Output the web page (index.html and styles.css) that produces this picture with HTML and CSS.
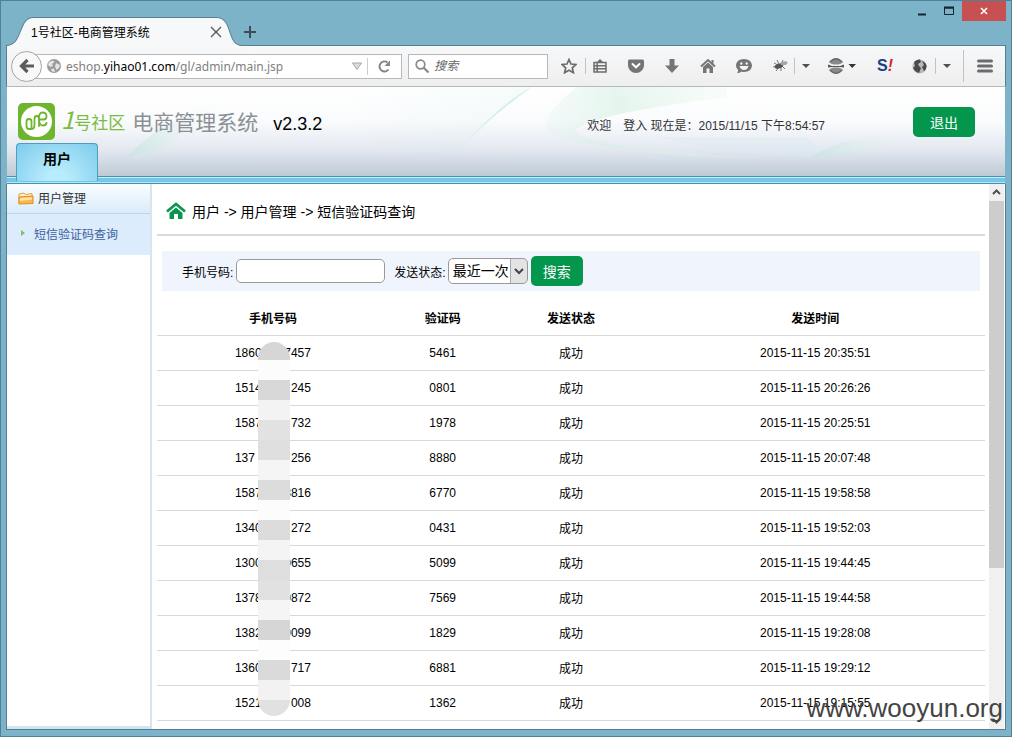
FILE: index.html
```html
<!DOCTYPE html>
<html lang="zh-CN">
<head>
  <meta charset="UTF-8" />
  <meta name="viewport" content="width=device-width, initial-scale=1.0"/>
  <title>1号社区-电商管理系统</title>
  <link rel="stylesheet" href="styles.css">
</head>
<body>
  <div class="window">
    <div class="titlebar">
      <div class="tab">
        <svg class="tab-shape" viewBox="0 0 242 29" preserveAspectRatio="none">
          <path d="M0 29V28.500C18 28.500 12 1.500 28 1.500H216C233 1.500 226 28.500 242 28.500V29Z" fill="#f7f8f9"/>
          <path d="M0 28.500C18 28.500 12 1.500 28 1.500H216C233 1.500 226 28.500 242 28.500" fill="none" stroke="#587f90"/>
        </svg>
        <span class="tab-title">1号社区-电商管理系统</span>
        <button class="plain" aria-label="关闭标签页">
          <svg width="12" height="12" viewBox="0 0 12 12"><path d="M1 1L11 11M11 1L1 11" stroke="#555" stroke-width="1.300"/></svg>
        </button>
      </div>
      <button class="plain new-tab" aria-label="新标签页">
        <svg width="14" height="14" viewBox="0 0 14 14"><path d="M7 1V13M1 7H13" stroke="#3f4d54" stroke-width="2"/></svg>
      </button>
      <div class="window-buttons">
        <button class="plain" aria-label="最小化"><svg width="10" height="10" viewBox="0 0 10 10"><path d="M1 8.500H9" stroke="#16242b" stroke-width="2"/></svg></button>
        <button class="plain" aria-label="最大化"><svg width="10" height="10" viewBox="0 0 10 10"><path d="M.5 2H9.500V8.500H.5Z" fill="none" stroke="#16242b"/><path d="M0 1.500H10" stroke="#16242b" stroke-width="2"/></svg></button>
        <button class="plain close" aria-label="关闭"><svg width="8" height="8" viewBox="0 0 8 8"><path d="M1 1L7 7M7 1L1 7" stroke="#fff" stroke-width="1.600"/></svg></button>
      </div>
    </div>

    <div class="toolbar">
      <button class="plain back" aria-label="后退">
        <svg width="16" height="16" viewBox="0 0 16 16"><path d="M8.500 2L2.500 8L8.500 14M3 8H15" fill="none" stroke="#5c5c5e" stroke-width="3.200"/></svg>
      </button>
      <div class="urlbar">
        <svg width="14" height="14" viewBox="0 0 14 14"><circle cx="7" cy="7" r="7" fill="#9b9b9b"/><path d="M2 3L6 1.500L7.500 3L5 5L6 7L3.500 8L1 6ZM9 4L13 6L12 9L9.500 11L8 7.500ZM4 10L7 9.500L8 13L5 12.500Z" fill="#e4e4e4"/></svg>
        <span class="url">eshop.<b>yihao01.com</b>/gl/admin/main.jsp</span>
        <svg width="10" height="8" viewBox="0 0 10 8"><path d="M.5 1H9.500L5 7.500Z" fill="#ddd" stroke="#a5a5a5"/></svg>
        <button class="plain reload" aria-label="刷新">
          <svg width="13" height="13" viewBox="0 0 13 13"><path d="M10.500 9.500A5 5 0 1 1 9.500 2.500" fill="none" stroke="#858587" stroke-width="2"/><path d="M12 .5V6H6.500Z" fill="#858587"/></svg>
        </button>
      </div>
      <div class="searchbar">
        <svg width="15" height="15" viewBox="0 0 15 15"><circle cx="5.500" cy="5.500" r="4.300" fill="none" stroke="#8a8a8c" stroke-width="1.700"/><path d="M8.500 8.500L13.500 13.500" stroke="#8a8a8c" stroke-width="2.300"/></svg>
        <input type="text" placeholder="搜索" aria-label="搜索网络">
      </div>

      <button class="plain tool star" aria-label="收藏"><svg width="16" height="16" viewBox="0 0 16 16"><path d="M8 1.500L10 6L15 6.500L11.300 9.800L12.400 14.700L8 12.200L3.600 14.700L4.700 9.800L1 6.500L6 6Z" fill="none" stroke="#6c6c6e" stroke-width="1.700"/></svg></button>
      <i class="sep"></i>
      <button class="plain tool list" aria-label="书签"><svg width="16" height="16" viewBox="0 0 16 16"><path d="M2 4.500H14V14H2ZM2 7.700H14M2 10.800H14M5.200 4.500V14" fill="none" stroke="#6c6c6e" stroke-width="1.500"/><path d="M5 4L8 1L11 4Z" fill="#6c6c6e"/></svg></button>
      <button class="plain tool" aria-label="Pocket"><svg width="16" height="16" viewBox="0 0 16 16"><path d="M1.500 1.500H14.500Q16 1.500 16 3V7.500A8 7.500 0 0 1 0 7.500V3Q0 1.500 1.500 1.500Z" fill="#757577"/><path d="M4.500 6L8 9.300L11.500 6" fill="none" stroke="#fff" stroke-width="2" stroke-linecap="round"/></svg></button>
      <button class="plain tool" aria-label="下载"><svg width="16" height="16" viewBox="0 0 16 16"><path d="M5.500 1H10.500V7.500H15L8 15L1 7.500H5.500Z" fill="#757577"/></svg></button>
      <button class="plain tool" aria-label="主页"><svg width="16" height="16" viewBox="0 0 16 16"><path d="M1 8.500L8 2L15 8.500" fill="none" stroke="#757577" stroke-width="2"/><path d="M3 9L8 4.500L13 9V15H9.500V10.500H6.500V15H3ZM11.500 2H13.500V6L11.500 4Z" fill="#757577"/></svg></button>
      <button class="plain tool" aria-label="聊天"><svg width="16" height="16" viewBox="0 0 16 16"><path d="M8 1C12.500 1 16 3.800 16 7.500S12.500 14 8 14Q6.500 14 5.500 13.500Q4 15 1 15Q2.500 13.500 2 11.800Q0 10 0 7.500C0 3.800 3.500 1 8 1Z" fill="#757577"/><circle cx="5.300" cy="5.500" r="1.200" fill="#f4f4f4"/><circle cx="10.700" cy="5.500" r="1.200" fill="#f4f4f4"/><path d="M3.500 8H12.500Q11.500 12 8 12T3.500 8Z" fill="#f4f4f4"/></svg></button>
      <button class="plain tool bug" aria-label="Firebug"><svg width="16" height="16" viewBox="0 0 16 16"><path d="M2 5L5 6.500M1 9L5 8M4 13L7 9M9 13V9M13 11L10 8M11 2L9 6M5 2L7 6" stroke="#777" fill="none"/><ellipse cx="7" cy="8" rx="4.500" ry="2.300" fill="#555" transform="rotate(-20 7 8)"/><ellipse cx="12" cy="5.300" rx="3.500" ry="1.800" fill="#a5a5a5" transform="rotate(-10 12 5)"/></svg></button>
      <i class="sep"></i>
      <button class="plain caret" aria-label="Firebug 菜单"><svg width="8" height="4" viewBox="0 0 8 4"><path d="M0 0H8L4 4Z" fill="#505052"/></svg></button>
      <button class="plain proxy" aria-label="代理"><svg width="28" height="16" viewBox="0 0 28 16"><path d="M2.500 5.500Q3.500 1 8 1T13.500 5.500L10.500 6.500H5.500ZM2.500 10.500Q3.500 15 8 15T13.500 10.500L10.500 9.500H5.500Z" fill="#8a8a8a"/><path d="M1.500 4.500Q8 -3 14.500 4.500M1.500 11.500Q8 19 14.500 11.500" fill="none" stroke="#666" stroke-width="1.300"/><path d="M0 6.500L4 8H12L16 6.500V9.500L12 9H4L0 9.500Z" fill="#555"/><path d="M20.500 6H28L24.200 10Z" fill="#333"/></svg></button>
      <button class="plain tool seo" aria-label="S!"><span>S<em>!</em></span></button>
      <button class="plain tool globe" aria-label="地球"><svg width="15" height="15" viewBox="0 0 15 15"><circle cx="7.500" cy="7.500" r="7" fill="#b9b9b9"/><path d="M2 3Q5 0 8 .6L9 3L6 5L7 7L9 9L7 14Q3 13 1 9L3 7ZM10 2Q15 4 14.500 8Q14 11 12 12L10 8L12 6Z" fill="#4a4a4a"/></svg></button>
      <i class="sep"></i>
      <button class="plain caret" aria-label="更多"><svg width="8" height="4" viewBox="0 0 8 4"><path d="M0 0H8L4 4Z" fill="#505052"/></svg></button>
      <i class="sep tall"></i>
      <button class="plain menu" aria-label="打开菜单"><svg width="16" height="14" viewBox="0 0 16 14"><path d="M1.500 2H14.500M1.500 7H14.500M1.500 12H14.500" stroke="#6c6c6e" stroke-width="3" stroke-linecap="round"/></svg></button>
    </div>

    <header class="banner">
      <svg class="waves" viewBox="0 0 998 90" preserveAspectRatio="none">
        <defs>
          <linearGradient id="wave" x1="0" y1="0" x2="1" y2="0"><stop offset="0" stop-color="#c9ece3" stop-opacity="0"/><stop offset="1" stop-color="#c9ece3" stop-opacity=".4"/></linearGradient>
          <linearGradient id="fade" x1="0" y1="0" x2="1" y2="0"><stop offset="0" stop-color="#bfe6dc" stop-opacity=".6"/><stop offset="1" stop-color="#e8f5f2" stop-opacity="0"/></linearGradient>
          <linearGradient id="swoosh" x1="0" y1="0" x2="1" y2="0"><stop offset="0" stop-color="#d9f1ea" stop-opacity=".2"/><stop offset=".3" stop-color="#d5f0e2" stop-opacity=".6"/><stop offset="1" stop-color="#e9f8ee" stop-opacity="0"/></linearGradient>
        </defs>
        <path d="M120 70Q150 35 215 15Q180 45 155 62Z" fill="url(#fade)"/>
        <path d="M340 0H525Q490 24 455 62Q400 75 350 50Z" fill="url(#wave)" opacity=".4"/>
        <path d="M525 0Q495 15 455 60Q480 32 525 0Z" fill="#c0e8da" opacity=".6"/>
        <path d="M720 0H570Q520 40 550 50Q640 72 780 72Q570 62 569 43Q580 28 720 10Z" fill="url(#swoosh)"/>
        <path d="M650 50H800L820 70Q740 72 650 50Z" fill="#ddebf0" opacity=".4"/>
        <path d="M805 70Q835 48 895 50Q860 65 825 70Z" fill="url(#fade)"/>
      </svg>
      <div class="banner-top">
        <svg class="logo" width="37" height="37" viewBox="0 0 37 37">
          <rect width="37" height="37" rx="5" fill="#6cb52d"/>
          <circle cx="18.500" cy="18.500" r="15.500" fill="#fff"/>
          <path d="M14 26H11Q8.500 26 8.500 23V18.500Q8.500 16 11 16T13.500 18.500V26M13.500 26Q16.500 26 16.500 22V15.500Q16.500 13 18.700 13T21 15.500V23M21 17Q20.500 9.500 24.500 9.500Q28.500 9.500 28.500 13.500Q28.500 16.500 25.500 16.500H22M21 17Q21.500 22.500 25 22.500Q28 22.500 28.500 20" fill="none" stroke="#6cb52d" stroke-width="1.800" stroke-linecap="round"/>
        </svg>
        <span class="brand"><i>1</i>号社区</span>
        <span class="system">电商管理系统</span>
        <span class="version">v2.3.2</span>
        <span class="welcome">欢迎&emsp;登入 现在是：2015/11/15 下午8:54:57</span>
        <button class="btn logout">退出</button>
      </div>
      <nav class="nav"><a href="#">用户</a></nav>
    </header>

    <div class="content">
      <aside class="sidebar">
        <div class="menu-title">
          <svg width="16" height="14" viewBox="0 0 16 14"><path d="M1 12.500V3L6 2L7.500 3.500L14 2.500V6" fill="#fff3cf" stroke="#e4a13b"/><path d="M1 6L15 5V12.500L1 13Z" fill="#fbb649" stroke="#de8f2a"/><path d="M2 7L14 6.300V8.500L2 10Z" fill="#ffe2a6"/></svg>
          用户管理
        </div>
        <a class="menu-item" href="#"><svg width="4" height="6" viewBox="0 0 4 6"><path d="M0 0L4 3L0 6Z" fill="#7fbf6c"/></svg>短信验证码查询</a>
      </aside>

      <main class="main">
        <div class="crumbs">
          <svg width="20" height="18" viewBox="0 0 20 18"><path d="M1 9.500L10 2L19 9.500" fill="none" stroke="#0b9650" stroke-width="2.800"/><path d="M3.500 11L10 5.600L16.500 11V17H12V12H8V17H3.500Z" fill="#0b9650"/></svg>
          用户 -&gt; 用户管理 -&gt; 短信验证码查询
        </div>

        <form class="search">
          <label for="phone">手机号码:</label>
          <input type="text" id="phone">
          <label class="status-label" for="status">发送状态:</label>
          <div class="select">
            <select id="status">
              <option>最近一次</option>
            </select>
            <svg width="10" height="7" viewBox="0 0 10 7"><path d="M1 1L5 5L9 1" fill="none" stroke="#444" stroke-width="2"/></svg>
          </div>
          <button type="button" class="btn">搜索</button>
        </form>

        <div class="records">
          <table>
            <thead>
              <tr><th class="c-phone">手机号码</th><th class="c-code">验证码</th><th class="c-status">发送状态</th><th>发送时间</th></tr>
            </thead>
            <tbody>
              <tr><td><span class="phone"><span>1860</span><span>7457</span></span></td><td>5461</td><td>成功</td><td>2015-11-15 20:35:51</td></tr>
              <tr><td><span class="phone"><span>1514</span><span>245</span></span></td><td>0801</td><td>成功</td><td>2015-11-15 20:26:26</td></tr>
              <tr><td><span class="phone"><span>1587</span><span>732</span></span></td><td>1978</td><td>成功</td><td>2015-11-15 20:25:51</td></tr>
              <tr><td><span class="phone"><span>137</span><span>256</span></span></td><td>8880</td><td>成功</td><td>2015-11-15 20:07:48</td></tr>
              <tr><td><span class="phone"><span>1587</span><span>8816</span></span></td><td>6770</td><td>成功</td><td>2015-11-15 19:58:58</td></tr>
              <tr><td><span class="phone"><span>1340</span><span>272</span></span></td><td>0431</td><td>成功</td><td>2015-11-15 19:52:03</td></tr>
              <tr><td><span class="phone"><span>1300</span><span>0655</span></span></td><td>5099</td><td>成功</td><td>2015-11-15 19:44:45</td></tr>
              <tr><td><span class="phone"><span>1378</span><span>0872</span></span></td><td>7569</td><td>成功</td><td>2015-11-15 19:44:58</td></tr>
              <tr><td><span class="phone"><span>1382</span><span>9099</span></span></td><td>1829</td><td>成功</td><td>2015-11-15 19:28:08</td></tr>
              <tr><td><span class="phone"><span>1360</span><span>717</span></span></td><td>6881</td><td>成功</td><td>2015-11-15 19:29:12</td></tr>
              <tr><td><span class="phone"><span>1521</span><span>008</span></span></td><td>1362</td><td>成功</td><td>2015-11-15 19:15:55</td></tr>
            </tbody>
          </table>
          <div class="mask"></div>
        </div>
      </main>

      <div class="scrollbar">
        <svg width="15" height="17" viewBox="0 0 15 17"><path d="M4 10L7.500 6.500L11 10" fill="none" stroke="#505050" stroke-width="2"/></svg>
        <div class="thumb"></div>
        <svg width="15" height="17" viewBox="0 0 15 17"><path d="M4 7L7.500 10.500L11 7" fill="none" stroke="#505050" stroke-width="2"/></svg>
      </div>
    </div>
    <div class="watermark">www.wooyun.org</div>
  </div>
</body>
</html>
```

FILE: styles.css
```css
* {
  box-sizing: border-box;
}
body {
  margin: 0;
  font-family: "Liberation Sans", "Noto Sans CJK SC", sans-serif;
  font-size: 12px;
  color: #000;
}
svg {
  display: block;
  flex: none;
}
button, input, select {
  font: inherit;
}
a {
  text-decoration: none;
}
.plain {
  display: flex;
  align-items: center;
  justify-content: center;
  flex: none;
  padding: 0;
  border: none;
  background: none;
}

/* browser window */
.window {
  position: relative;
  display: flex;
  flex-direction: column;
  height: 100vh;
  overflow: hidden;
  padding: 0 5px 6px;
  background: #7db3c9;
  border: 1px solid #4f8299;
}
.titlebar {
  display: flex;
  height: 44px;
  flex: none;
}
.tab {
  position: relative;
  display: flex;
  align-items: center;
  width: 236px;
  height: 29px;
  margin-top: 15px;
  padding: 2px 20px 0 25px;
}
.tab-shape {
  position: absolute;
  left: 0;
  top: 0;
  width: 100%;
  height: 30px;
  z-index: 1;
}
.tab-title {
  flex: 1;
  white-space: nowrap;
}
.tab-title, .tab .plain {
  position: relative;
  z-index: 2;
}
.new-tab {
  height: 29px;
  margin: 16px 0 0 1px;
}
.window-buttons {
  display: flex;
  margin-left: auto;
}
.window-buttons .plain {
  width: 27px;
  height: 20px;
}
.window-buttons .close {
  width: 44px;
  background: #c75050;
}

/* toolbar */
.toolbar {
  display: flex;
  align-items: center;
  flex: none;
  height: 42px;
  padding-left: 4px;
  background: linear-gradient(#f7f8f9, #eeeeef);
  border: 1px solid #587f90;
  border-bottom-color: #b5b9bb;
}
.back {
  z-index: 1;
  width: 31px;
  height: 31px;
  background: #f8f8f8;
  border: 1px solid #a5a5a5;
  border-radius: 50%;
}
.urlbar, .searchbar {
  display: flex;
  align-items: center;
  height: 25px;
  min-width: 0;
  background: #fff;
  border: 1px solid #b5b9bb;
}
.urlbar {
  flex: 376 1 0;
  margin-left: -15px;
  padding-left: 19px;
}
.url {
  flex: 1;
  padding-left: 5px;
  font-family: "Noto Sans", sans-serif;
  font-size: 12px;
  color: #808080;
  white-space: nowrap;
}
.url b {
  font-weight: normal;
  color: #000;
}
.reload {
  width: 34px;
  height: 17px;
  margin-left: 5px;
  border-left: 1px solid #ccc;
}
.searchbar {
  flex: 140 1 0;
  margin-left: 6px;
  padding-left: 6px;
}
.searchbar input {
  flex: 1;
  min-width: 0;
  border: none;
  padding: 0 4px;
  background: none;
}
.searchbar input::placeholder {
  color: #666;
  font-style: italic;
}
.tool {
  width: 36px;
}
.star {
  width: 32px;
  margin-left: 5px;
}
.list {
  width: 32px;
  padding-right: 4px;
}
.bug {
  width: 32px;
  padding-left: 4px;
}
.sep {
  width: 1px;
  height: 16px;
  flex: none;
  background: #c3c3c3;
}
.sep.tall {
  height: 32px;
  margin-left: 5px;
}
.caret {
  width: 22px;
}
.proxy {
  width: 50px;
}
.seo span {
  font-size: 16px;
  font-weight: bold;
  color: #1b3f86;
}
.seo em {
  color: #d8232a;
}
.globe {
  width: 32px;
}
.menu {
  width: 41px;
}

/* banner */
.banner {
  position: relative;
  flex: none;
  margin: 0 1px;
  background: linear-gradient(#fff 0, #fafbfd 35%, #e3e8f0 65%, #b9c6d1 95%);
}
.waves {
  position: absolute;
  left: 0;
  top: 0;
  width: 100%;
  height: 90px;
}
.banner-top {
  position: relative;
  display: flex;
  align-items: center;
  padding: 16px 30px 3px 11px;
  white-space: nowrap;
}
.brand {
  margin-left: 6px;
  font-size: 17px;
  line-height: 37px;
  color: #7cbb3c;
}
.brand i {
  font-size: 24px;
  line-height: 30px;
}
.brand, .system {
  font-family: "Noto Sans CJK SC", sans-serif;
}
.system {
  margin-left: 7px;
  font-size: 21px;
  line-height: 37px;
  color: #8b9094;
}
.version {
  margin-left: 15px;
  padding-top: 6px;
  font-size: 18px;
}
.welcome {
  margin-left: auto;
  padding-top: 6px;
  color: #333;
}
.btn {
  height: 30px;
  padding: 0 12px;
  border: none;
  border-radius: 5px;
  background: #04964c;
  color: #fff;
  font-size: 14px;
}
.logout {
  margin-left: 88px;
  padding: 0 17px;
}
.nav {
  position: relative;
  display: flex;
  height: 41px;
  padding-left: 9px;
  background: linear-gradient(#3c96b4 0 1px, #c2effc 1px 2px, #7cc4e6 2px 6px, #b4e6f8 6px 7px, #3c96b4 7px) bottom / 100% 8px no-repeat;
}
.nav a {
  width: 82px;
  height: 38px;
  border: 1px solid #4b9fc0;
  border-bottom: none;
  border-radius: 4px 4px 0 0;
  background: radial-gradient(ellipse at 50% 100%, #b6ecfb 20%, #7ecbed 100%);
  color: #000;
  font-size: 14px;
  font-weight: bold;
  line-height: 30px;
  text-align: center;
}

/* page content */
.content {
  display: flex;
  flex: 1;
  min-height: 0;
  background: #fff;
  border: 1px solid #587f90;
  border-top: none;
}
.sidebar {
  width: 145px;
  flex: none;
  border-right: 2px solid #d5e6f1;
  border-bottom: 3px solid #cfe5f1;
}
.menu-title {
  display: flex;
  align-items: center;
  gap: 4px;
  height: 30px;
  padding: 0 0 2px 11px;
  background: linear-gradient(#fafdff, #d9ebf9);
  border-bottom: 1px solid #b8d6ec;
  color: #333;
}
.menu-item {
  display: flex;
  align-items: center;
  gap: 9px;
  height: 41px;
  padding: 0 0 3px 14px;
  background: #dcecfc;
  color: #3d5f9d;
}
.main {
  flex: 1;
  min-width: 0;
  overflow: hidden;
  padding: 0 4px 0 5px;
}
.crumbs {
  display: flex;
  align-items: center;
  gap: 6px;
  height: 52px;
  padding: 4px 0 0 9px;
  border-bottom: 2px solid #dadada;
  font-size: 14px;
}
.search {
  display: flex;
  align-items: center;
  height: 40px;
  margin: 15px 5px 9px;
  padding-left: 20px;
  background: #f0f5fd;
}
.search input {
  width: 149px;
  height: 24px;
  margin-left: 3px;
  border: 1px solid #999;
  border-radius: 5px;
}
.status-label {
  margin-left: 9px;
}
.select {
  position: relative;
  margin: 0 3px 0 2px;
}
.select select {
  display: block;
  appearance: none;
  width: 80px;
  height: 26px;
  padding: 0 18px 0 4px;
  border: 1px solid #999;
  border-radius: 5px;
  background: linear-gradient(90deg, #aaa 1px, #e3e3e3 1px) right / 17px 100% no-repeat #fff;
  color: #000;
  font-size: 14px;
}
.select svg {
  position: absolute;
  right: 4px;
  top: 10px;
  pointer-events: none;
}
.records {
  position: relative;
}
table {
  width: 100%;
  border-collapse: collapse;
  table-layout: fixed;
}
th, td {
  height: 35px;
  padding: 0;
  border-bottom: 1px solid #d8d8d8;
  text-align: center;
}
.c-phone {
  width: 28%;
}
.c-code {
  width: 13%;
}
.c-status {
  width: 18%;
}
.phone {
  display: flex;
  justify-content: space-between;
  width: 76px;
  margin: 0 auto;
}
/* hides the middle digits */
.mask {
  position: absolute;
  left: 101px;
  top: 42px;
  width: 32px;
  height: 374px;
  border-radius: 16px;
  background: linear-gradient(
    #d6d6d6 0 18px, #fcfcfc 18px 38px, #d8d8d8 38px 58px, #f3f3f3 58px 78px,
    #e2e2e2 78px 98px, #dfdfdf 98px 118px, #f5f5f5 118px 138px, #dcdcdc 138px 158px,
    #fcfcfc 158px 178px, #dcdcdc 178px 198px, #f4f4f4 198px 218px, #dedede 218px 238px,
    #e1e1e1 238px 258px, #f5f5f5 258px 278px, #d6d6d6 278px 298px, #fdfdfd 298px 318px,
    #dadada 318px 338px, #f2f2f2 338px 358px, #e1e1e1 358px);
}

.scrollbar {
  display: flex;
  flex-direction: column;
  width: 16px;
  flex: none;
  background: #f0f0f0;
  border-right: 1px solid #fff;
}
.thumb {
  flex: 0 0 72%;
  max-height: 367px;
  margin-bottom: auto;
  background: #cdcdcd;
}
.watermark {
  position: absolute;
  right: 8px;
  bottom: 12px;
  font-size: 26px;
  color: #444;
}
```
